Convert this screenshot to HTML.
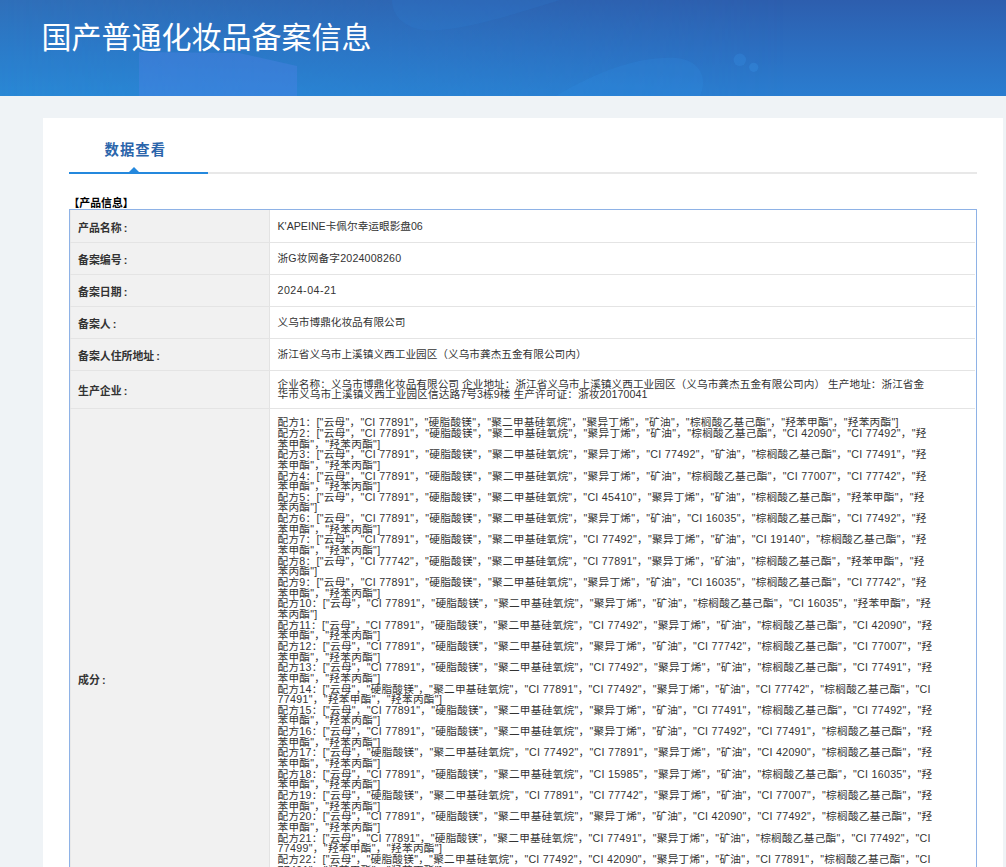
<!DOCTYPE html>
<html lang="zh-CN"><head><meta charset="utf-8"><title>国产普通化妆品备案信息</title>
<style>
html,body{margin:0;padding:0}
body{background:#eff3f6}
#pg{width:1006px;height:867px;overflow:hidden;position:relative;background:#eff3f6;
 font-family:"Liberation Sans","Noto Sans CJK SC",sans-serif;color:#333;}
.abs{position:absolute}
#hd{left:0;top:0;width:1006px;height:96px;overflow:hidden;
 background:linear-gradient(180deg,#2d5eae 0%,#2c6ec0 50%,#2a7dd0 100%);}
#hd:before{content:'';position:absolute;left:0;top:0;width:1006px;height:96px;background:linear-gradient(180deg,#2f6fb9 0%,#2b7bc9 50%,#2988d5 100%);-webkit-mask-image:linear-gradient(90deg,#000 0%,transparent 78%);mask-image:linear-gradient(90deg,#000 0%,transparent 78%)}
#hd svg{position:absolute;left:0;top:0}
#title{left:41.5px;top:16.3px;height:44px;line-height:44px;font-size:30px;color:#fff;white-space:nowrap}
#panel{left:43px;top:118px;width:960px;height:760px;background:#fff}
#tab{left:65.8px;top:139.2px;width:139px;height:22px;line-height:22px;text-align:center;font-size:14.3px;letter-spacing:1.05px;font-weight:bold;color:#2b65ab;white-space:nowrap}
#tl1{left:69px;top:172px;width:908px;height:2px;background:#e8e8e8}
#tl2{left:69px;top:172px;width:139px;height:2px;background:#2488dd}
#tri{left:129px;top:167px;width:0;height:0;border-left:5px solid transparent;border-right:5px solid transparent;border-bottom:5px solid #2488dd}
#sec{left:68.4px;top:197.1px;height:13px;line-height:13px;font-size:10.9px;font-weight:bold;color:#000;white-space:nowrap}
#tbl{left:69px;top:209px;width:906px;height:700px;border:1px solid #8eb2e6;border-bottom:none;background:#fff}
#lab{left:70px;top:210px;width:199px;height:700px;background:#f1f1f1;border-right:1px solid #e3e3e3;box-shadow:inset 1px 0 0 #e9e9e9}
.hr{left:70px;width:905px;height:1px;background:#e4e4e4}
.lb{left:78px;height:12px;line-height:12px;font-size:10.9px;font-weight:bold;color:#333;white-space:nowrap}
.c{margin-left:2.1px}
.v{left:277.5px;height:10.65px;line-height:10.65px;font-size:10.67px;color:#333;white-space:nowrap}
</style></head>
<body><div id="pg">
<div id="hd" class="abs"><svg width="1006" height="96" viewBox="0 0 1006 96">
<polygon points="139,52 239,53 297,66 297,96 139,96" fill="#5a86ee" fill-opacity=".30"/>
<path d="M392,0 C392,18 408,33 440,30 C480,26 520,12 560,0 Z" fill="#2f95ea" fill-opacity=".11"/>
<path d="M556,96 C600,70 640,56 676,58 C700,60 708,78 700,96 Z" fill="#2f95ea" fill-opacity=".16"/>
<circle cx="739.8" cy="59.8" r="6.2" fill="#3d9cf0" fill-opacity=".22"/>
<circle cx="753.7" cy="67.3" r="4.6" fill="#3d9cf0" fill-opacity=".25"/>
</svg></div>
<div id="title" class="abs">国产普通化妆品备案信息</div>
<div id="panel" class="abs"></div>
<div id="tab" class="abs">数据查看</div>
<div id="tl1" class="abs"></div><div id="tl2" class="abs"></div><div id="tri" class="abs"></div>
<div id="sec" class="abs">【产品信息】</div>
<div id="tbl" class="abs"></div><div id="lab" class="abs"></div>
<div class="abs hr" style="top:242px"></div>
<div class="abs hr" style="top:274px"></div>
<div class="abs hr" style="top:306px"></div>
<div class="abs hr" style="top:338px"></div>
<div class="abs hr" style="top:370px"></div>
<div class="abs hr" style="top:408px"></div>
<div class="abs lb" style="top:222.0px">产品名称<span class="c">:</span></div>
<div class="abs lb" style="top:254.0px">备案编号<span class="c">:</span></div>
<div class="abs lb" style="top:286.0px">备案日期<span class="c">:</span></div>
<div class="abs lb" style="top:318.0px">备案人<span class="c">:</span></div>
<div class="abs lb" style="top:350.0px">备案人住所地址<span class="c">:</span></div>
<div class="abs lb" style="top:385.0px">生产企业<span class="c">:</span></div>
<div class="abs lb" style="top:674.0px">成分<span class="c">:</span></div>
<div class="abs v" id="v0" style="top:221.18px;letter-spacing:-0.003px">K'APEINE卡佩尔幸运眼影盘06</div>
<div class="abs v" id="v1" style="top:253.18px;letter-spacing:0.184px">浙G妆网备字2024008260</div>
<div class="abs v" id="v2" style="top:285.18px;letter-spacing:0.476px">2024-04-21</div>
<div class="abs v" id="v3" style="top:317.18px">义乌市博鼎化妆品有限公司</div>
<div class="abs v" id="v4" style="top:349.18px">浙江省义乌市上溪镇义西工业园区（义乌市龚杰五金有限公司内）</div>
<div class="abs v" id="e0" style="top:378.88px;letter-spacing:0.023px">企业名称：义乌市博鼎化妆品有限公司 企业地址：浙江省义乌市上溪镇义西工业园区（义乌市龚杰五金有限公司内） 生产地址：浙江省金</div>
<div class="abs v" id="e1" style="top:389.18px;letter-spacing:0.089px">华市义乌市上溪镇义西工业园区信达路7号3栋9楼 生产许可证：浙妆20170041</div>
<div class="abs v" id="f0" style="top:417.28px;letter-spacing:0.249px">配方1：["云母"，"CI 77891"，"硬脂酸镁"，"聚二甲基硅氧烷"，"聚异丁烯"，"矿油"，"棕榈酸乙基己酯"，"羟苯甲酯"，"羟苯丙酯"]</div>
<div class="abs v" id="f1" style="top:427.93px;letter-spacing:0.275px">配方2：["云母"，"CI 77891"，"硬脂酸镁"，"聚二甲基硅氧烷"，"聚异丁烯"，"矿油"，"棕榈酸乙基己酯"，"CI 42090"，"CI 77492"，"羟</div>
<div class="abs v" id="f2" style="top:438.58px;letter-spacing:0.276px">苯甲酯"，"羟苯丙酯"]</div>
<div class="abs v" id="f3" style="top:449.23px;letter-spacing:0.275px">配方3：["云母"，"CI 77891"，"硬脂酸镁"，"聚二甲基硅氧烷"，"聚异丁烯"，"CI 77492"，"矿油"，"棕榈酸乙基己酯"，"CI 77491"，"羟</div>
<div class="abs v" id="f4" style="top:459.88px;letter-spacing:0.276px">苯甲酯"，"羟苯丙酯"]</div>
<div class="abs v" id="f5" style="top:470.53px;letter-spacing:0.275px">配方4：["云母"，"CI 77891"，"硬脂酸镁"，"聚二甲基硅氧烷"，"聚异丁烯"，"矿油"，"棕榈酸乙基己酯"，"CI 77007"，"CI 77742"，"羟</div>
<div class="abs v" id="f6" style="top:481.18px;letter-spacing:0.276px">苯甲酯"，"羟苯丙酯"]</div>
<div class="abs v" id="f7" style="top:491.83px;letter-spacing:0.271px">配方5：["云母"，"CI 77891"，"硬脂酸镁"，"聚二甲基硅氧烷"，"CI 45410"，"聚异丁烯"，"矿油"，"棕榈酸乙基己酯"，"羟苯甲酯"，"羟</div>
<div class="abs v" id="f8" style="top:502.48px;letter-spacing:0.245px">苯丙酯"]</div>
<div class="abs v" id="f9" style="top:513.12px;letter-spacing:0.275px">配方6：["云母"，"CI 77891"，"硬脂酸镁"，"聚二甲基硅氧烷"，"聚异丁烯"，"矿油"，"CI 16035"，"棕榈酸乙基己酯"，"CI 77492"，"羟</div>
<div class="abs v" id="f10" style="top:523.78px;letter-spacing:0.276px">苯甲酯"，"羟苯丙酯"]</div>
<div class="abs v" id="f11" style="top:534.43px;letter-spacing:0.275px">配方7：["云母"，"CI 77891"，"硬脂酸镁"，"聚二甲基硅氧烷"，"CI 77492"，"聚异丁烯"，"矿油"，"CI 19140"，"棕榈酸乙基己酯"，"羟</div>
<div class="abs v" id="f12" style="top:545.08px;letter-spacing:0.276px">苯甲酯"，"羟苯丙酯"]</div>
<div class="abs v" id="f13" style="top:555.73px;letter-spacing:0.271px">配方8：["云母"，"CI 77742"，"硬脂酸镁"，"聚二甲基硅氧烷"，"CI 77891"，"聚异丁烯"，"矿油"，"棕榈酸乙基己酯"，"羟苯甲酯"，"羟</div>
<div class="abs v" id="f14" style="top:566.38px;letter-spacing:0.245px">苯丙酯"]</div>
<div class="abs v" id="f15" style="top:577.03px;letter-spacing:0.275px">配方9：["云母"，"CI 77891"，"硬脂酸镁"，"聚二甲基硅氧烷"，"聚异丁烯"，"矿油"，"CI 16035"，"棕榈酸乙基己酯"，"CI 77742"，"羟</div>
<div class="abs v" id="f16" style="top:587.68px;letter-spacing:0.276px">苯甲酯"，"羟苯丙酯"]</div>
<div class="abs v" id="f17" style="top:598.33px;letter-spacing:0.275px">配方10：["云母"，"CI 77891"，"硬脂酸镁"，"聚二甲基硅氧烷"，"聚异丁烯"，"矿油"，"棕榈酸乙基己酯"，"CI 16035"，"羟苯甲酯"，"羟</div>
<div class="abs v" id="f18" style="top:608.98px;letter-spacing:0.245px">苯丙酯"]</div>
<div class="abs v" id="f19" style="top:619.62px;letter-spacing:0.279px">配方11：["云母"，"CI 77891"，"硬脂酸镁"，"聚二甲基硅氧烷"，"CI 77492"，"聚异丁烯"，"矿油"，"棕榈酸乙基己酯"，"CI 42090"，"羟</div>
<div class="abs v" id="f20" style="top:630.28px;letter-spacing:0.276px">苯甲酯"，"羟苯丙酯"]</div>
<div class="abs v" id="f21" style="top:640.93px;letter-spacing:0.270px">配方12：["云母"，"CI 77891"，"硬脂酸镁"，"聚二甲基硅氧烷"，"聚异丁烯"，"矿油"，"CI 77742"，"棕榈酸乙基己酯"，"CI 77007"，"羟</div>
<div class="abs v" id="f22" style="top:651.58px;letter-spacing:0.276px">苯甲酯"，"羟苯丙酯"]</div>
<div class="abs v" id="f23" style="top:662.23px;letter-spacing:0.270px">配方13：["云母"，"CI 77891"，"硬脂酸镁"，"聚二甲基硅氧烷"，"CI 77492"，"聚异丁烯"，"矿油"，"棕榈酸乙基己酯"，"CI 77491"，"羟</div>
<div class="abs v" id="f24" style="top:672.88px;letter-spacing:0.276px">苯甲酯"，"羟苯丙酯"]</div>
<div class="abs v" id="f25" style="top:683.53px;letter-spacing:0.247px">配方14：["云母"，"硬脂酸镁"，"聚二甲基硅氧烷"，"CI 77891"，"CI 77492"，"聚异丁烯"，"矿油"，"CI 77742"，"棕榈酸乙基己酯"，"CI</div>
<div class="abs v" id="f26" style="top:694.18px;letter-spacing:0.316px">77491"，"羟苯甲酯"，"羟苯丙酯"]</div>
<div class="abs v" id="f27" style="top:704.83px;letter-spacing:0.270px">配方15：["云母"，"CI 77891"，"硬脂酸镁"，"聚二甲基硅氧烷"，"聚异丁烯"，"矿油"，"CI 77491"，"棕榈酸乙基己酯"，"CI 77492"，"羟</div>
<div class="abs v" id="f28" style="top:715.48px;letter-spacing:0.276px">苯甲酯"，"羟苯丙酯"]</div>
<div class="abs v" id="f29" style="top:726.12px;letter-spacing:0.270px">配方16：["云母"，"CI 77891"，"硬脂酸镁"，"聚二甲基硅氧烷"，"聚异丁烯"，"矿油"，"CI 77492"，"CI 77491"，"棕榈酸乙基己酯"，"羟</div>
<div class="abs v" id="f30" style="top:736.78px;letter-spacing:0.276px">苯甲酯"，"羟苯丙酯"]</div>
<div class="abs v" id="f31" style="top:747.43px;letter-spacing:0.270px">配方17：["云母"，"硬脂酸镁"，"聚二甲基硅氧烷"，"CI 77492"，"CI 77891"，"聚异丁烯"，"矿油"，"CI 42090"，"棕榈酸乙基己酯"，"羟</div>
<div class="abs v" id="f32" style="top:758.08px;letter-spacing:0.276px">苯甲酯"，"羟苯丙酯"]</div>
<div class="abs v" id="f33" style="top:768.73px;letter-spacing:0.270px">配方18：["云母"，"CI 77891"，"硬脂酸镁"，"聚二甲基硅氧烷"，"CI 15985"，"聚异丁烯"，"矿油"，"棕榈酸乙基己酯"，"CI 16035"，"羟</div>
<div class="abs v" id="f34" style="top:779.38px;letter-spacing:0.276px">苯甲酯"，"羟苯丙酯"]</div>
<div class="abs v" id="f35" style="top:790.03px;letter-spacing:0.270px">配方19：["云母"，"硬脂酸镁"，"聚二甲基硅氧烷"，"CI 77891"，"CI 77742"，"聚异丁烯"，"矿油"，"CI 77007"，"棕榈酸乙基己酯"，"羟</div>
<div class="abs v" id="f36" style="top:800.68px;letter-spacing:0.276px">苯甲酯"，"羟苯丙酯"]</div>
<div class="abs v" id="f37" style="top:811.33px;letter-spacing:0.270px">配方20：["云母"，"CI 77891"，"硬脂酸镁"，"聚二甲基硅氧烷"，"聚异丁烯"，"矿油"，"CI 42090"，"CI 77492"，"棕榈酸乙基己酯"，"羟</div>
<div class="abs v" id="f38" style="top:821.98px;letter-spacing:0.276px">苯甲酯"，"羟苯丙酯"]</div>
<div class="abs v" id="f39" style="top:832.62px;letter-spacing:0.247px">配方21：["云母"，"CI 77891"，"硬脂酸镁"，"聚二甲基硅氧烷"，"CI 77491"，"聚异丁烯"，"矿油"，"棕榈酸乙基己酯"，"CI 77492"，"CI</div>
<div class="abs v" id="f40" style="top:843.28px;letter-spacing:0.316px">77499"，"羟苯甲酯"，"羟苯丙酯"]</div>
<div class="abs v" id="f41" style="top:853.93px;letter-spacing:0.247px">配方22：["云母"，"硬脂酸镁"，"聚二甲基硅氧烷"，"CI 77492"，"CI 42090"，"聚异丁烯"，"矿油"，"CI 77891"，"棕榈酸乙基己酯"，"CI</div>
<div class="abs v" id="f42" style="top:864.58px;letter-spacing:0.316px">77491"，"羟苯甲酯"，"羟苯丙酯"]</div>
</div></body></html>
